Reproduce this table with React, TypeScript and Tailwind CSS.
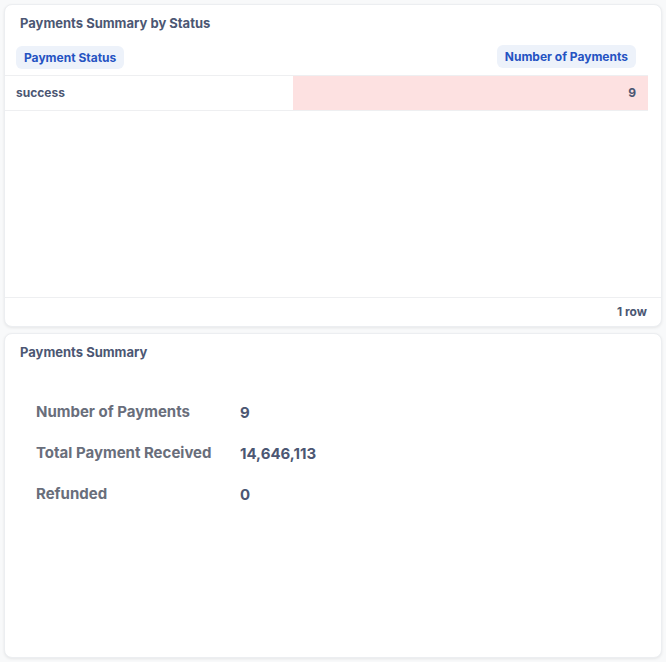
import React from "react";

const font = { fontFamily: "Inter, 'Noto Sans', sans-serif" };

function StatusTable() {
  return (
    <div className="flex flex-col h-[323px] bg-white rounded-lg border border-[#eceef1] shadow-[0_1px_3px_rgba(0,0,0,0.08)] overflow-hidden">
      <div className="pl-[15px] pt-[9px] h-[34px] text-[13px] leading-[18px] font-bold text-[#4c5773]">
        Payments Summary by Status
      </div>
      <div className="flex-1 mr-[13px]">
        <div className="flex items-center h-[37px] border-b border-[#eeeff1] pb-[1px]">
          <div className="w-[288px] pl-[11px]">
            <span className="inline-block px-2 h-[23px] leading-[23px] rounded-md bg-[#edf2fa] text-[12px] font-bold text-[#2553c2]">
              Payment Status
            </span>
          </div>
          <div className="flex-1 flex justify-end pr-3">
            <span className="inline-block px-2 h-[23px] leading-[23px] rounded-md bg-[#edf2fa] text-[12px] font-bold text-[#2553c2]">
              Number of Payments
            </span>
          </div>
        </div>
        <div className="flex h-[35px] border-b border-[#eeeff1]">
          <div className="w-[288px] pl-[11px] flex items-center text-[12px] font-bold text-[#4c5773]">
            success
          </div>
          <div className="flex-1 bg-[#fde1e1] flex items-center justify-end pr-3 text-[12px] font-bold text-[#4c5773]">
            9
          </div>
        </div>
      </div>
      <div className="h-[29px] border-t border-[#eeeff1] flex items-center justify-end pr-[14px] text-[12px] font-bold text-[#4c5773]">
        1 row
      </div>
    </div>
  );
}

function Summary() {
  const rows = [
    ["Number of Payments", "9"],
    ["Total Payment Received", "14,646,113"],
    ["Refunded", "0"],
  ];
  return (
    <div className="flex-1 bg-white rounded-lg border border-[#eceef1] shadow-[0_1px_3px_rgba(0,0,0,0.08)]">
      <div className="pl-[15px] pt-[9px] text-[13px] leading-[18px] font-bold text-[#4c5773]">
        Payments Summary
      </div>
      <div className="grid grid-cols-[204px_1fr] gap-y-[18px] pl-[31px] pt-[40px]">
        {rows.map(([label, value]) => (
          <React.Fragment key={label}>
            <div className="text-[15px] leading-[22px] font-bold text-[#696e7b]">{label}</div>
            <div className="text-[15px] leading-[22px] font-bold text-[#4c5773] pt-[1px]">{value}</div>
          </React.Fragment>
        ))}
      </div>
    </div>
  );
}

export default function App() {
  return (
    <div style={font} className="w-[666px] h-[662px] bg-[#f8f9fa] pl-1 pr-[4px] py-1 flex flex-col gap-[6px]">
      <StatusTable />
      <Summary />
    </div>
  );
}
